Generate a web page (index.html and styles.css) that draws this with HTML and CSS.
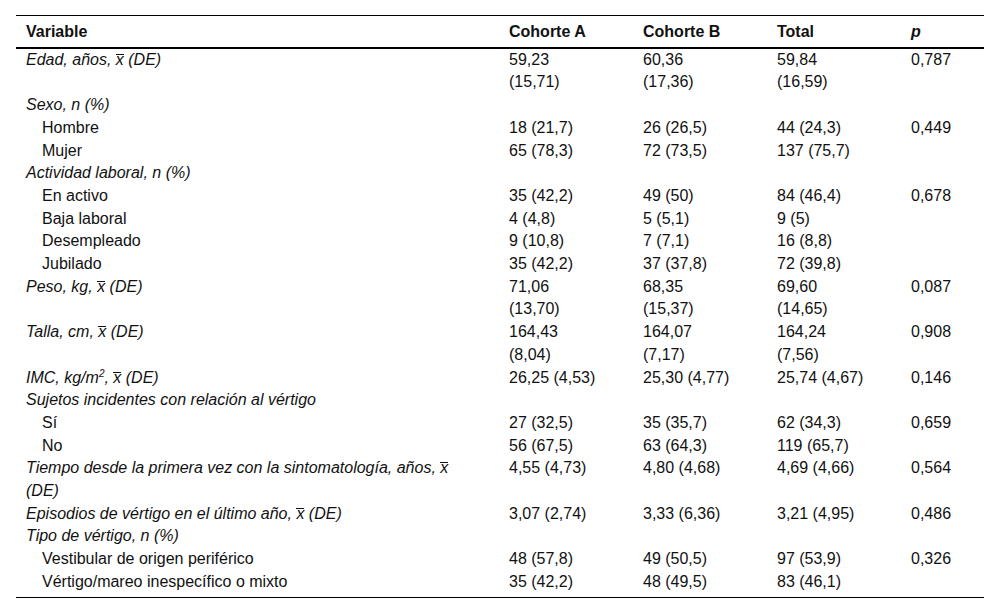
FILE: index.html
```html
<!DOCTYPE html>
<html lang="es">
<head>
<meta charset="utf-8">
<title>Tabla</title>
<link rel="stylesheet" href="styles.css">
</head>
<body>
<table class="data">
  <colgroup>
    <col class="c-var">
    <col class="c-num">
    <col class="c-num">
    <col class="c-num">
    <col class="c-p">
  </colgroup>
  <thead>
    <tr><th>Variable</th><th>Cohorte A</th><th>Cohorte B</th><th>Total</th><th><i>p</i></th></tr>
  </thead>
  <tbody>
    <tr><td class="var"><i>Edad, años, <span class="xbar">x</span> (DE)</i></td><td>59,23 (15,71)</td><td>60,36 (17,36)</td><td>59,84 (16,59)</td><td>0,787</td></tr>
    <tr><td class="var"><i>Sexo, n (%)</i></td><td></td><td></td><td></td><td></td></tr>
    <tr><td class="var sub">Hombre</td><td>18 (21,7)</td><td>26 (26,5)</td><td>44 (24,3)</td><td>0,449</td></tr>
    <tr><td class="var sub">Mujer</td><td>65 (78,3)</td><td>72 (73,5)</td><td>137 (75,7)</td><td></td></tr>
    <tr><td class="var"><i>Actividad laboral, n (%)</i></td><td></td><td></td><td></td><td></td></tr>
    <tr><td class="var sub">En activo</td><td>35 (42,2)</td><td>49 (50)</td><td>84 (46,4)</td><td>0,678</td></tr>
    <tr><td class="var sub">Baja laboral</td><td>4 (4,8)</td><td>5 (5,1)</td><td>9 (5)</td><td></td></tr>
    <tr><td class="var sub">Desempleado</td><td>9 (10,8)</td><td>7 (7,1)</td><td>16 (8,8)</td><td></td></tr>
    <tr><td class="var sub">Jubilado</td><td>35 (42,2)</td><td>37 (37,8)</td><td>72 (39,8)</td><td></td></tr>
    <tr><td class="var"><i>Peso, kg, <span class="xbar">x</span> (DE)</i></td><td>71,06 (13,70)</td><td>68,35 (15,37)</td><td>69,60 (14,65)</td><td>0,087</td></tr>
    <tr><td class="var"><i>Talla, cm, <span class="xbar">x</span> (DE)</i></td><td>164,43 (8,04)</td><td>164,07 (7,17)</td><td>164,24 (7,56)</td><td>0,908</td></tr>
    <tr><td class="var"><i>IMC, kg/m<sup>2</sup>, <span class="xbar">x</span> (DE)</i></td><td>26,25 (4,53)</td><td>25,30 (4,77)</td><td>25,74 (4,67)</td><td>0,146</td></tr>
    <tr><td class="var"><i>Sujetos incidentes con relación al vértigo</i></td><td></td><td></td><td></td><td></td></tr>
    <tr><td class="var sub">Sí</td><td>27 (32,5)</td><td>35 (35,7)</td><td>62 (34,3)</td><td>0,659</td></tr>
    <tr><td class="var sub">No</td><td>56 (67,5)</td><td>63 (64,3)</td><td>119 (65,7)</td><td></td></tr>
    <tr><td class="var"><i>Tiempo desde la primera vez con la sintomatología, años, <span class="xbar">x</span> (DE)</i></td><td>4,55 (4,73)</td><td>4,80 (4,68)</td><td>4,69 (4,66)</td><td>0,564</td></tr>
    <tr><td class="var"><i>Episodios de vértigo en el último año, <span class="xbar">x</span> (DE)</i></td><td>3,07 (2,74)</td><td>3,33 (6,36)</td><td>3,21 (4,95)</td><td>0,486</td></tr>
    <tr><td class="var"><i>Tipo de vértigo, n (%)</i></td><td></td><td></td><td></td><td></td></tr>
    <tr><td class="var sub">Vestibular de origen periférico</td><td>48 (57,8)</td><td>49 (50,5)</td><td>97 (53,9)</td><td>0,326</td></tr>
    <tr class="last"><td class="var sub">Vértigo/mareo inespecífico o mixto</td><td>35 (42,2)</td><td>48 (49,5)</td><td>83 (46,1)</td><td></td></tr>
  </tbody>
</table>
</body>
</html>
```
FILE: styles.css
```css
html, body {
  margin: 0;
  padding: 0;
  background: #fff;
}

body {
  font-family: "Liberation Sans", Arial, sans-serif;
  font-size: 16px;
  color: #111;
}

.data {
  margin: 15px 0 0 16px;
  width: 968px;
  border-collapse: collapse;
  table-layout: fixed;
  border-top: 1px solid #000;
  border-bottom: 1px solid #000;
}

.c-var { width: 483px; }
.c-num { width: 134px; }
.c-p { width: 83px; }

.data th {
  text-align: left;
  font-weight: bold;
  padding: 5px 10px 3px 10px;
  line-height: 22.7px;
  border-bottom: 2px solid #000;
}

.data td {
  vertical-align: top;
  padding: 0 33px 0 10px;
  line-height: 22.7px;
}

.data td.var {
  padding-right: 33px;
}

.data td.sub {
  padding-left: 26px;
}

.data tr.last td {
  padding-bottom: 3px;
}

.data sup {
  font-size: 10px;
  line-height: 0;
  vertical-align: 6px;
}

.xbar {
  display: inline-block;
  line-height: 10px;
  border-top: 1px solid currentColor;
}
```
